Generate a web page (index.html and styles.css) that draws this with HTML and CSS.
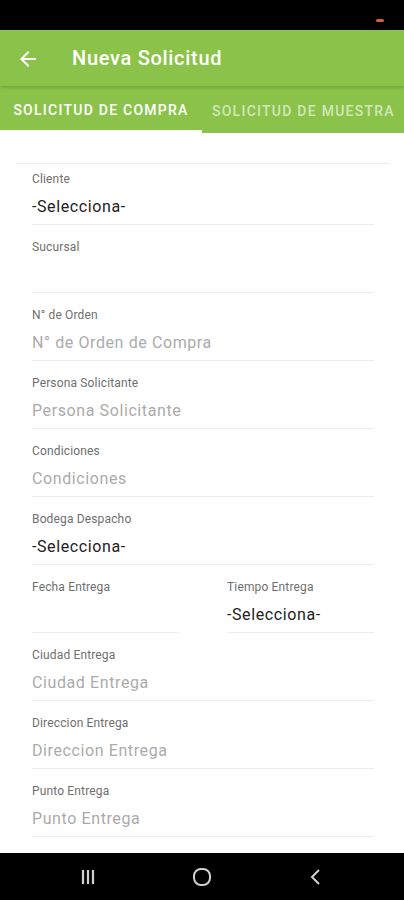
FILE: index.html
```html
<!DOCTYPE html>
<html lang="es">
<head>
  <meta charset="UTF-8" />
  <meta name="viewport" content="width=device-width, initial-scale=1.0" />
  <title>Nueva Solicitud</title>
  <link rel="stylesheet" href="styles.css">
</head>
<body>

  <div class="statusbar"><span class="status-dot"></span></div>

  <div class="appbar">
    <svg class="back" width="24" height="24" viewBox="0 0 24 24">
      <path d="M20 11H7.83l5.59-5.59L12 4l-8 8 8 8 1.41-1.41L7.83 13H20v-2z" fill="#fff"/>
    </svg>
    <h1>Nueva Solicitud</h1>
  </div>

  <div class="tabs">
    <div class="tab active">SOLICITUD DE COMPRA</div>
    <div class="tab">SOLICITUD DE MUESTRA</div>
  </div>

  <div class="content">
    <div class="card">
      <div class="field">
        <div class="label">Cliente</div>
        <div class="value selected">-Selecciona-</div>
      </div>
      <div class="field">
        <div class="label">Sucursal</div>
        <div class="value"></div>
      </div>
      <div class="field">
        <div class="label">N° de Orden</div>
        <div class="value">N° de Orden de Compra</div>
      </div>
      <div class="field">
        <div class="label">Persona Solicitante</div>
        <div class="value">Persona Solicitante</div>
      </div>
      <div class="field">
        <div class="label">Condiciones</div>
        <div class="value">Condiciones</div>
      </div>
      <div class="field">
        <div class="label">Bodega Despacho</div>
        <div class="value selected">-Selecciona-</div>
      </div>
      <div class="row">
        <div class="field">
          <div class="label">Fecha Entrega</div>
          <div class="value"></div>
        </div>
        <div class="field">
          <div class="label">Tiempo Entrega</div>
          <div class="value selected">-Selecciona-</div>
        </div>
      </div>
      <div class="field">
        <div class="label">Ciudad Entrega</div>
        <div class="value">Ciudad Entrega</div>
      </div>
      <div class="field">
        <div class="label">Direccion Entrega</div>
        <div class="value">Direccion Entrega</div>
      </div>
      <div class="field">
        <div class="label">Punto Entrega</div>
        <div class="value">Punto Entrega</div>
      </div>
    </div>
  </div>

  <div class="navbar">
    <svg width="18" height="18" viewBox="0 0 18 18">
      <path d="M4 2v14M9 2v14M14 2v14" stroke="#d0d0d0" stroke-width="2.2" fill="none"/>
    </svg>
    <svg width="20" height="20" viewBox="0 0 20 20">
      <rect x="2" y="2" width="16" height="16" rx="7" stroke="#d0d0d0" stroke-width="2" fill="none"/>
    </svg>
    <svg width="18" height="18" viewBox="0 0 18 18">
      <path d="M12 2L5 9l7 7" stroke="#d0d0d0" stroke-width="2" fill="none"/>
    </svg>
  </div>

</body>
</html>
```

FILE: styles.css
```css
body {
  margin: 0;
  padding: 0;
  background: white;
  font-family: Roboto, "Liberation Sans", sans-serif;
  display: flex;
  flex-direction: column;
  height: 900px;
  overflow: hidden;
}

.statusbar {
  height: 30px;
  background: black;
  position: relative;
  flex-shrink: 0;
}

.status-dot {
  position: absolute;
  top: 19px;
  left: 376px;
  width: 8px;
  height: 3px;
  border-radius: 2px;
  background: #d0603f;
}

.appbar {
  height: 56px;
  background: #8bc34a;
  display: flex;
  align-items: center;
  padding: 0 16px 0 16px;
  box-shadow: 0 2px 3px rgba(0, 0, 0, 0.15);
  position: relative;
  z-index: 1;
  flex-shrink: 0;
}

.appbar .back {
  margin-right: 32px;
  margin-top: 2px;
}

.appbar h1 {
  margin: 0;
  color: white;
  font-size: 20px;
  font-weight: 500;
  letter-spacing: 0.7px;
}

.tabs {
  height: 47px;
  background: #8bc34a;
  display: flex;
  overflow: hidden;
  flex-shrink: 0;
}

.tab {
  flex-shrink: 0;
  height: 100%;
  box-sizing: border-box;
  display: flex;
  align-items: center;
  justify-content: center;
  padding: 2px 10px 0;
  color: rgba(255, 255, 255, 0.62);
  font-size: 14px;
  font-weight: 500;
  letter-spacing: 1.25px;
  white-space: nowrap;
}

.tab.active {
  width: 202px;
  color: white;
  border-bottom: 3px solid white;
  padding-top: 3px;
}

.content {
  flex: 1;
  overflow: hidden;
  padding: 30px 14px 0 16px;
}

.card {
  border-top: 1px solid #ececec;
  padding: 0 16px;
}

.field {
  padding-top: 8px;
  margin-bottom: 7px;
}

.label {
  font-size: 12px;
  line-height: 14px;
  color: #6f6f6f;
  letter-spacing: 0.15px;
}

.value {
  margin-top: 11px;
  height: 20px;
  line-height: 20px;
  padding-bottom: 7px;
  border-bottom: 1px solid #ededed;
  font-size: 16px;
  color: #ababab;
  letter-spacing: 0.6px;
}

.value.selected {
  color: #222;
}

.row {
  display: grid;
  grid-template-columns: 1fr 1fr;
  column-gap: 48px;
}

.navbar {
  height: 47px;
  background: black;
  display: flex;
  align-items: center;
  justify-content: center;
  gap: 95px;
  flex-shrink: 0;
}
```
